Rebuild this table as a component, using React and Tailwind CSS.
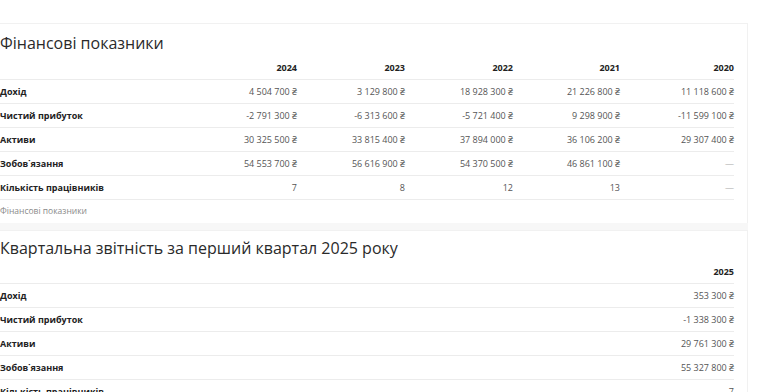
import React from 'react';

const yearly = {
  years: ['2024', '2023', '2022', '2021', '2020'],
  rows: [
    { label: 'Дохід', values: ['4 504 700 ₴', '3 129 800 ₴', '18 928 300 ₴', '21 226 800 ₴', '11 118 600 ₴'] },
    { label: 'Чистий прибуток', values: ['-2 791 300 ₴', '-6 313 600 ₴', '-5 721 400 ₴', '9 298 900 ₴', '-11 599 100 ₴'] },
    { label: 'Активи', values: ['30 325 500 ₴', '33 815 400 ₴', '37 894 000 ₴', '36 106 200 ₴', '29 307 400 ₴'] },
    { label: 'Зобов˙язання', values: ['54 553 700 ₴', '56 616 900 ₴', '54 370 500 ₴', '46 861 100 ₴', '—'] },
    { label: 'Кількість працівників', values: ['7', '8', '12', '13', '—'] },
  ],
};

const quarterly = {
  years: ['2025'],
  rows: [
    { label: 'Дохід', values: ['353 300 ₴'] },
    { label: 'Чистий прибуток', values: ['-1 338 300 ₴'] },
    { label: 'Активи', values: ['29 761 300 ₴'] },
    { label: 'Зобов˙язання', values: ['55 327 800 ₴'] },
    { label: 'Кількість працівників', values: ['7'] },
  ],
};

const font = { fontFamily: '"Open Sans", "Noto Sans", sans-serif' };

const YearlyTable = () => (
  <div className="w-[734px]">
    <div className="grid grid-cols-[189px_108px_108px_108px_107px_114px] h-6 items-center border-b border-[#ececec]">
      <div />
      {yearly.years.map((y) => (
        <div key={y} className="text-right text-[9px] font-bold text-[#222]">{y}</div>
      ))}
    </div>
    {yearly.rows.map((row) => (
      <div key={row.label} className="grid grid-cols-[189px_108px_108px_108px_107px_114px] h-6 items-center border-b border-[#ececec]">
        <div className="text-[9px] font-bold text-[#222]">{row.label}</div>
        {row.values.map((v, i) => (
          <div key={i} className={`text-right text-[9px] ${v === '—' ? 'text-[#aaa]' : 'text-[#555]'}`}>{v}</div>
        ))}
      </div>
    ))}
    <div className="h-[23px] flex items-center text-[8.5px] text-[#8a8a8a]">Фінансові показники</div>
  </div>
);

const QuarterTable = () => (
  <div className="w-[734px]">
    <div className="grid grid-cols-[1fr_120px] h-6 items-center border-b border-[#ececec]">
      <div />
      <div className="text-right text-[9px] font-bold text-[#222]">{quarterly.years[0]}</div>
    </div>
    {quarterly.rows.map((row) => (
      <div key={row.label} className="grid grid-cols-[1fr_120px] h-6 items-center border-b border-[#ececec]">
        <div className="text-[9px] font-bold text-[#222]">{row.label}</div>
        <div className="text-right text-[9px] text-[#555]">{row.values[0]}</div>
      </div>
    ))}
  </div>
);

export default function App() {
  return (
    <div className="w-[768px] h-[392px] overflow-hidden bg-white" style={font}>
      <div className="pt-[23px] w-[748px]">
        <section className="border-t border-r border-[#f1f1f1] pr-[13px] pt-[6px] bg-white">
          <h2 className="h-[26px] flex items-center text-[16px] text-[#2a2a2a]">Фінансові показники</h2>
          <YearlyTable />
        </section>
        <div className="h-[7px] bg-[#f7f7f7]" />
        <section className="border-t border-r border-[#f1f1f1] pr-[13px] pt-[5px] bg-white">
          <h2 className="h-6 flex items-center text-[16px] text-[#2a2a2a]">Квартальна звітність за перший квартал 2025 року</h2>
          <QuarterTable />
        </section>
      </div>
    </div>
  );
}
